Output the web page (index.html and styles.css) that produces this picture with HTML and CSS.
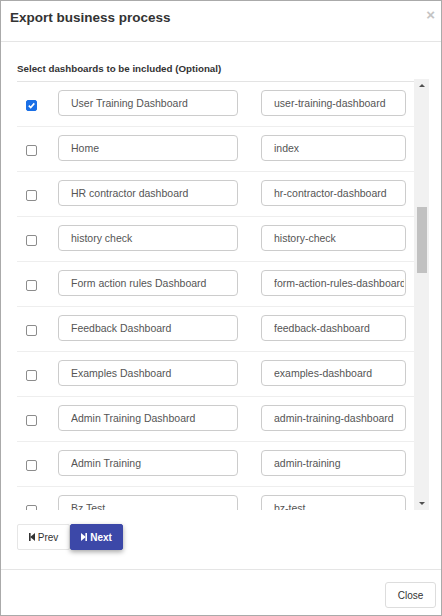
FILE: index.html
```html
<!DOCTYPE html>
<html>
<head>
<meta charset="utf-8">
<link rel="stylesheet" href="styles.css">
</head>
<body>
<div class="modal">
  <div class="modal-header">
    <h4 class="title">Export business process</h4>
    <span class="close">×</span>
  </div>
  <div class="modal-body">
    <div class="subhead">Select dashboards to be included (Optional)</div>
    <div class="scroller">
      <div class="list">
        <div class="row first"><input type="checkbox" class="cb" checked><input class="field name" value="User Training Dashboard"><input class="field slug" value="user-training-dashboard"></div>
        <div class="row"><input type="checkbox" class="cb"><input class="field name" value="Home"><input class="field slug" value="index"></div>
        <div class="row"><input type="checkbox" class="cb"><input class="field name" value="HR contractor dashboard"><input class="field slug" value="hr-contractor-dashboard"></div>
        <div class="row"><input type="checkbox" class="cb"><input class="field name" value="history check"><input class="field slug" value="history-check"></div>
        <div class="row"><input type="checkbox" class="cb"><input class="field name" value="Form action rules Dashboard"><input class="field slug" value="form-action-rules-dashboard"></div>
        <div class="row"><input type="checkbox" class="cb"><input class="field name" value="Feedback Dashboard"><input class="field slug" value="feedback-dashboard"></div>
        <div class="row"><input type="checkbox" class="cb"><input class="field name" value="Examples Dashboard"><input class="field slug" value="examples-dashboard"></div>
        <div class="row"><input type="checkbox" class="cb"><input class="field name" value="Admin Training Dashboard"><input class="field slug" value="admin-training-dashboard"></div>
        <div class="row"><input type="checkbox" class="cb"><input class="field name" value="Admin Training"><input class="field slug" value="admin-training"></div>
        <div class="row"><input type="checkbox" class="cb"><input class="field name" value="Bz Test"><input class="field slug" value="bz-test"></div>
      </div>
      <div class="scrollbar">
        <div class="sb-btn"><span class="tri-up"></span></div>
        <div class="sb-track"><div class="sb-thumb"></div></div>
        <div class="sb-btn"><span class="tri-down"></span></div>
      </div>
    </div>
    <div class="pager">
      <button class="btn prev"><svg class="ico" width="6" height="8" viewBox="0 0 6 8"><rect x="0" y="0" width="1.6" height="8" fill="#333"/><polygon points="6,0 1.2,4 6,8" fill="#333"/></svg>Prev</button>
      <button class="btn next"><svg class="ico" width="6" height="8" viewBox="0 0 6 8"><polygon points="0,0 4.8,4 0,8" fill="#fff"/><rect x="4.4" y="0" width="1.6" height="8" fill="#fff"/></svg>Next</button>
    </div>
  </div>
  <div class="modal-footer">
    <button class="btn close-btn">Close</button>
  </div>
</div>
</body>
</html>
```
FILE: styles.css
```css
html, body {
  margin: 0;
  padding: 0;
  background: #fff;
}
body {
  font-family: "Liberation Sans", Arial, sans-serif;
  color: #333;
}
.modal {
  width: 442px;
  height: 616px;
  box-sizing: border-box;
  border: 1px solid #aaa;
  display: flex;
  flex-direction: column;
  background: #fff;
}
.modal-header {
  height: 41px;
  flex: none;
  box-sizing: border-box;
  border-bottom: 1px solid #e5e5e5;
  display: flex;
  align-items: flex-start;
  padding: 8px 6px 0 9px;
}
.title {
  margin: 0;
  flex: 1;
  font-size: 13.5px;
  line-height: 18px;
  font-weight: bold;
  color: #333;
}
.close {
  font-size: 15px;
  line-height: 14px;
  font-weight: bold;
  color: #c4c4c4;
  margin-top: -1px;
}
.modal-body {
  flex: 1;
  display: flex;
  flex-direction: column;
  padding: 0 12px 0 16px;
  min-height: 0;
}
.subhead {
  font-size: 9.75px;
  font-weight: bold;
  line-height: 14px;
  padding-top: 20px;
  margin-bottom: 3px;
  color: #333;
}
.scroller {
  display: flex;
  height: 431px;
  flex: none;
  overflow: hidden;
}
.list {
  flex: 1;
  padding-top: 2px;
  overflow: hidden;
}
.row {
  height: 45px;
  box-sizing: border-box;
  border-top: 1px solid #eeeeee;
  display: flex;
  align-items: flex-start;
  padding: 8px 0 0 8px;
}
.row.first {
  border-top-color: #e3e3e3;
}
.cb {
  -webkit-appearance: none;
  appearance: none;
  width: 11px;
  height: 11px;
  box-sizing: border-box;
  border: 1px solid #8c8c8c;
  border-radius: 2px;
  background: #fff;
  margin: 10px 21px 0 1px;
  flex: none;
}
.cb:checked {
  border-color: #1a6fe6;
  background-color: #1a6fe6;
  background-image: url("data:image/svg+xml,%3Csvg xmlns='http://www.w3.org/2000/svg' viewBox='0 0 9 9'%3E%3Cpath d='M1.8 4.6 L3.7 6.5 L7.3 2.4' fill='none' stroke='white' stroke-width='1.6'/%3E%3C/svg%3E");
  background-size: 9px 9px;
  background-repeat: no-repeat;
  background-position: center;
}
.field {
  height: 26px;
  box-sizing: border-box;
  border: 1px solid #cccccc;
  border-radius: 4px;
  padding: 0 1px 0 12px;
  font-family: "Liberation Sans", Arial, sans-serif;
  font-size: 10.5px;
  color: #555;
  background: #fff;
  outline: none;
  flex: none;
}
.name {
  width: 180px;
  margin-right: 23px;
}
.slug {
  width: 145px;
}
.scrollbar {
  width: 15px;
  flex: none;
  background: #f1f1f1;
  display: flex;
  flex-direction: column;
}
.sb-btn {
  height: 15px;
  flex: none;
  display: flex;
  align-items: center;
  justify-content: center;
}
.tri-up {
  width: 0;
  height: 0;
  border-left: 3px solid transparent;
  border-right: 3px solid transparent;
  border-bottom: 3px solid #505050;
  margin-top: -3px;
}
.tri-down {
  width: 0;
  height: 0;
  border-left: 3px solid transparent;
  border-right: 3px solid transparent;
  border-top: 3px solid #505050;
  margin-top: 1px;
}
.sb-track {
  flex: 1;
}
.sb-thumb {
  margin: 113px 2px 0 3px;
  height: 66px;
  background: #c1c1c1;
}
.pager {
  display: flex;
  margin-top: 14px;
}
.btn {
  height: 26px;
  box-sizing: border-box;
  font-family: "Liberation Sans", Arial, sans-serif;
  font-size: 10px;
  border-radius: 2px;
  display: inline-flex;
  align-items: center;
  justify-content: center;
  gap: 3px;
  padding: 0;
  margin: 0;
}
.ico {
  display: block;
  flex: none;
}
.prev {
  width: 53px;
  background: #fff;
  border: 1px solid #e6e6e6;
  color: #333;
}
.next {
  width: 53px;
  background: #3c48a8;
  border: 1px solid #3c48a8;
  color: #fff;
  font-weight: bold;
  box-shadow: 0 2px 5px rgba(0, 0, 0, 0.35);
}
.modal-footer {
  flex: none;
  border-top: 1px solid #e5e5e5;
  padding: 12px 5px 7px;
  display: flex;
  justify-content: flex-end;
}
.close-btn {
  width: 51px;
  background: #fff;
  border: 1px solid #ddd;
  border-radius: 3px;
  color: #333;
}
```
